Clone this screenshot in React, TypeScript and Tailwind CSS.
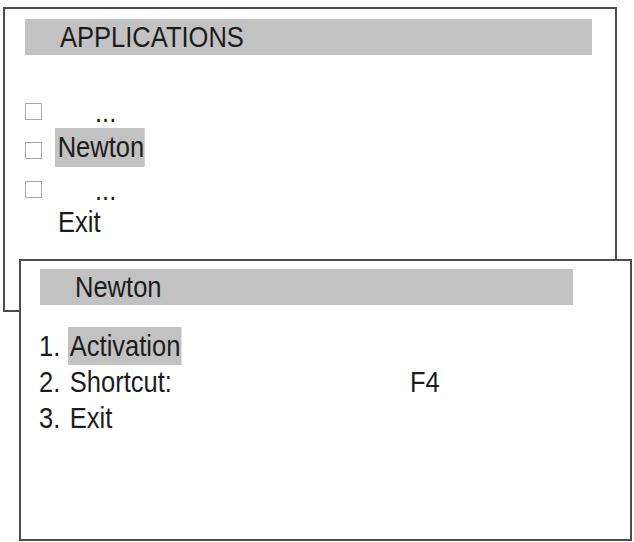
const txt = "inline-block origin-left scale-x-[0.88] whitespace-pre";

function Checkbox() {
  return <span className="mt-[14px] block h-[17px] w-[17px] shrink-0 border border-[#a8a8a8]" />;
}

export default function App() {
  return (
    <div className="h-[542px] w-[634px] overflow-hidden bg-white pt-[7px] font-['Liberation_Sans',Arial,sans-serif] text-[29px] text-[#1c1c1c]">
      {/* applications window */}
      <div className="ml-[3px] h-[305px] w-[614px] border-2 border-[#4d4d4d] bg-white">
        <div className="ml-[20px] mt-[10px] flex h-[36px] w-[567px] items-center bg-[#c2c2c2] pl-[35px] leading-[36px]">
          <span className={txt}>APPLICATIONS</span>
        </div>

        <div className="mt-[34px] pl-[20px]">
          <div className="flex h-[39px] items-start">
            <Checkbox />
            <span className={`${txt} ml-[53px] pt-[4px] leading-[39px]`}>...</span>
          </div>
          <div className="flex h-[39px] items-start">
            <Checkbox />
            <span className={`${txt} ml-[13px] bg-[#c2c2c2] pl-[3px] pr-[1px] leading-[39px]`}>Newton</span>
          </div>
          <div className="flex h-[39px] items-start">
            <Checkbox />
            <span className={`${txt} ml-[53px] pt-[4px] leading-[39px]`}>...</span>
          </div>
          <div className="flex h-[33px] items-start pl-[33px]">
            <span className={`${txt} leading-[33px]`}>Exit</span>
          </div>
        </div>
      </div>

      {/* Newton submenu window */}
      <div className="relative z-10 -mt-[53px] ml-[19px] h-[282px] w-[613px] border-2 border-[#4d4d4d] bg-white">
        <div className="ml-[19px] mt-[8px] flex h-[36px] w-[533px] items-center bg-[#c2c2c2] pl-[35px] leading-[36px]">
          <span className={txt}>Newton</span>
        </div>

        <div className="mt-[22px] pl-[18px]">
          <div className="grid h-[38px] grid-cols-[29px_342px_auto] leading-[38px]">
            <span className={txt}>1.</span>
            <span>
              <span className={`${txt} bg-[#c2c2c2] pl-[2px] pr-[1px]`}>Activation</span>
            </span>
          </div>
          <div className="grid h-[35px] grid-cols-[29px_342px_auto] leading-[35px]">
            <span className={txt}>2.</span>
            <span className={`${txt} pl-[2px]`}>Shortcut:</span>
            <span className={txt}>F4</span>
          </div>
          <div className="grid h-[36px] grid-cols-[29px_342px_auto] leading-[36px]">
            <span className={txt}>3.</span>
            <span className={`${txt} pl-[2px]`}>Exit</span>
          </div>
        </div>
      </div>
    </div>
  );
}
